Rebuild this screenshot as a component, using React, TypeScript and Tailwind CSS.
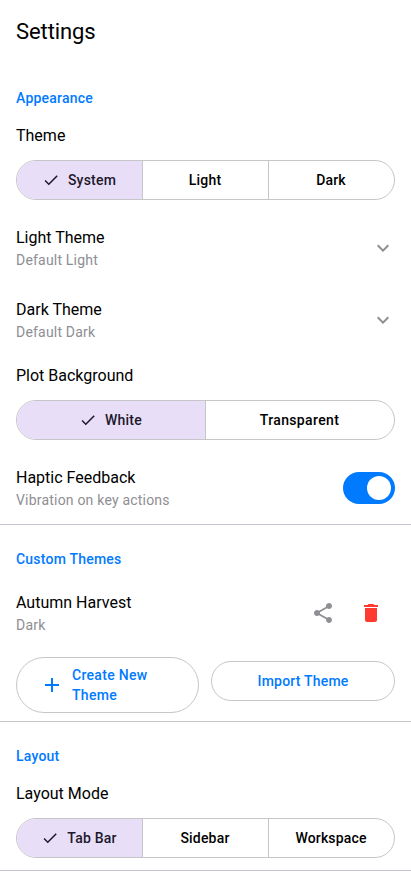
import React from "react";

const icons = {
  check: "M9 16.17 4.83 12l-1.42 1.41L9 19 21 7l-1.41-1.41z",
  chevron: "M7.41 8.59 12 13.17l4.59-4.58L18 10l-6 6-6-6 1.41-1.41z",
  add: "M19 13h-6v6h-2v-6H5v-2h6V5h2v6h6v2z",
  share:
    "M18 16.08c-.76 0-1.44.3-1.96.77L8.91 12.7c.05-.23.09-.46.09-.7s-.04-.47-.09-.7l7.05-4.11c.54.5 1.25.81 2.04.81 1.66 0 3-1.34 3-3s-1.34-3-3-3-3 1.34-3 3c0 .24.04.47.09.7L8.04 9.81C7.5 9.31 6.79 9 6 9c-1.66 0-3 1.34-3 3s1.34 3 3 3c.79 0 1.5-.31 2.04-.81l7.12 4.16c-.05.21-.08.43-.08.65 0 1.61 1.31 2.92 2.92 2.92 1.61 0 2.92-1.31 2.92-2.92s-1.31-2.92-2.92-2.92z",
  trash: "M6 19c0 1.1.9 2 2 2h8c1.1 0 2-.9 2-2V7H6v12zM19 4h-3.5l-1-1h-5l-1 1H5v2h14V4z",
};

function Icon({ name, className }: { name: keyof typeof icons; className: string }) {
  return (
    <svg viewBox="0 0 24 24" fill="currentColor" className={`shrink-0 ${className}`}>
      <path d={icons[name]} />
    </svg>
  );
}

type Option = { label: string; tracking?: string };

function Segmented({ options }: { options: Option[] }) {
  return (
    <div className="mx-4 flex h-10 overflow-hidden rounded-full border border-[#c6c6c8]">
      {options.map(({ label, tracking }, i) => (
        <button
          key={label}
          className={`flex flex-1 items-center justify-center text-sm font-medium ${tracking ?? "tracking-[0.2px]"} ${
            i === 0 ? "gap-2 bg-[#e8def8] text-[#1d192b]" : "border-l border-[#c6c6c8] text-black"
          }`}
        >
          {i === 0 && <Icon name="check" className="-ml-px size-[18px]" />}
          <span className={i === 0 ? "" : "pr-px"}>{label}</span>
        </button>
      ))}
    </div>
  );
}

function Heading({ children }: { children: string }) {
  return <h2 className="px-4 text-sm leading-5 font-medium tracking-[0.22px] text-[#007aff]">{children}</h2>;
}

function Label({ children }: { children: string }) {
  return <div className="px-4 text-base leading-6">{children}</div>;
}

function Row({ title, sub, children }: { title: string; sub: string; children: React.ReactNode }) {
  return (
    <div className="flex h-[72px] items-center justify-between px-4">
      <div>
        <div className="text-base leading-6">{title}</div>
        <div className="text-sm leading-5 tracking-[0.2px] text-[#8e8e93]">{sub}</div>
      </div>
      {children}
    </div>
  );
}

export default function App() {
  return (
    <main className="flex h-[891px] w-[411px] flex-col overflow-hidden bg-white font-['Roboto',sans-serif] text-black">
      <header className="flex h-16 items-center px-4">
        <h1 className="text-[22px] leading-7 tracking-[-0.1px]">Settings</h1>
      </header>

      <section className="flex h-[461px] flex-col border-b border-[#c7c5d0] pt-6">
        <Heading>Appearance</Heading>
        <div className="pt-4 pb-3">
          <Label>Theme</Label>
        </div>
        <Segmented options={[{ label: "System" }, { label: "Light" }, { label: "Dark" }]} />
        <div className="pt-3">
          <Row title="Light Theme" sub="Default Light">
            <Icon name="chevron" className="size-6 text-[#8e8e93]" />
          </Row>
          <Row title="Dark Theme" sub="Default Dark">
            <Icon name="chevron" className="size-6 text-[#8e8e93]" />
          </Row>
        </div>
        <div className="pt-2 pb-3">
          <Label>Plot Background</Label>
        </div>
        <Segmented options={[{ label: "White" }, { label: "Transparent", tracking: "tracking-[0.35px]" }]} />
        <div className="pt-3">
          <Row title="Haptic Feedback" sub="Vibration on key actions">
            <div className="flex h-8 w-[52px] items-center justify-end rounded-full bg-[#007aff] p-1">
              <div className="size-6 rounded-full bg-white" />
            </div>
          </Row>
        </div>
      </section>

      <section className="flex h-[197px] flex-col border-b border-[#c6c6c8] pt-6">
        <Heading>Custom Themes</Heading>
        <div className="pt-2">
          <Row title="Autumn Harvest" sub="Dark">
            <div className="flex items-center gap-6 pr-3">
              <Icon name="share" className="size-6 text-[#8e8e93]" />
              <Icon name="trash" className="size-6 text-[#ff3b30]" />
            </div>
          </Row>
        </div>
        <div className="flex items-start gap-3 px-4 pt-2">
          <button className="flex h-14 w-[183px] items-center gap-2 rounded-[28px] border border-[#c6c6c8] pl-[23px] text-left text-sm leading-5 font-medium tracking-[0.3px] text-[#007aff]">
            <Icon name="add" className="size-6" />
            <span>Create New<br />Theme</span>
          </button>
          <button className="mt-1 flex h-10 w-[184px] items-center justify-center rounded-full border border-[#c6c6c8] text-sm font-medium tracking-[0.2px] text-[#007aff]">
            Import Theme
          </button>
        </div>
      </section>

      <section className="flex h-[149px] flex-col border-b border-[#c7c5d0] pt-6">
        <Heading>Layout</Heading>
        <div className="pt-4 pb-3">
          <Label>Layout Mode</Label>
        </div>
        <Segmented
          options={[{ label: "Tab Bar" }, { label: "Sidebar" }, { label: "Workspace", tracking: "tracking-[0.15px]" }]}
        />
      </section>
    </main>
  );
}
